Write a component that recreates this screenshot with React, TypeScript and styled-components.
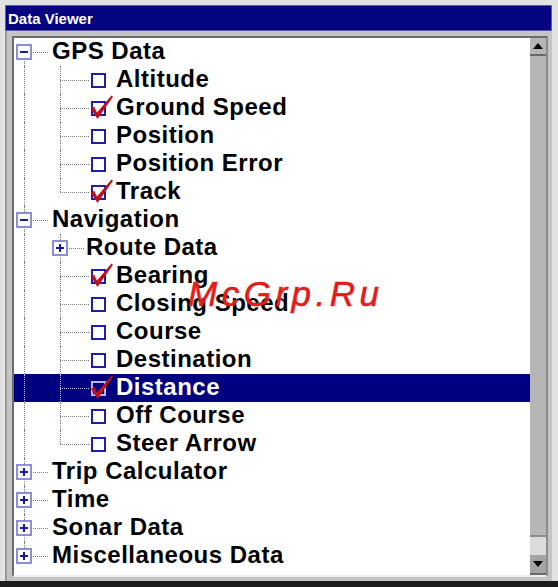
import * as React from "react";
import styled, { createGlobalStyle } from "styled-components";

type Node = {
  label: string;
  checked?: boolean;
  selected?: boolean;
  open?: boolean;
  group?: boolean;
  children?: Node[];
};

const tree: Node[] = [
  {
    label: "GPS Data",
    group: true,
    open: true,
    children: [
      { label: "Altitude" },
      { label: "Ground Speed", checked: true },
      { label: "Position" },
      { label: "Position Error" },
      { label: "Track", checked: true },
    ],
  },
  {
    label: "Navigation",
    group: true,
    open: true,
    children: [
      { label: "Route Data", group: true },
      { label: "Bearing", checked: true },
      { label: "Closing Speed" },
      { label: "Course" },
      { label: "Destination" },
      { label: "Distance", checked: true, selected: true },
      { label: "Off Course" },
      { label: "Steer Arrow" },
    ],
  },
  { label: "Trip Calculator", group: true },
  { label: "Time", group: true },
  { label: "Sonar Data", group: true },
  { label: "Miscellaneous Data", group: true },
];

type Row = {
  node: Node;
  level: number;
  first: boolean;
  last: boolean;
  parentLast: boolean;
};

function flatten(nodes: Node[]): Row[] {
  const rows: Row[] = [];
  nodes.forEach((node, i) => {
    const last = i === nodes.length - 1;
    rows.push({ node, level: 0, first: i === 0, last, parentLast: false });
    if (node.open && node.children) {
      node.children.forEach((child, j) => {
        rows.push({
          node: child,
          level: 1,
          first: false,
          last: j === node.children!.length - 1,
          parentLast: last,
        });
      });
    }
  });
  return rows;
}

export default function App() {
  const rows = flatten(tree);
  return (
    <>
      <GlobalStyle />
      <Window>
        <TitleBar>Data Viewer</TitleBar>
        <Body>
          <Panel>
            <Tree>
              {rows.map((r) => (
                <TreeRow key={r.node.label} row={r} />
              ))}
            </Tree>
            <Scrollbar>
              <ArrowButton>
                <Triangle viewBox="0 0 10 6">
                  <path d="M5 0 L10 6 L0 6 Z" />
                </Triangle>
              </ArrowButton>
              <Track>
                <Thumb />
              </Track>
              <ArrowButton $down>
                <Triangle viewBox="0 0 10 6">
                  <path d="M0 0 L10 0 L5 6 Z" />
                </Triangle>
              </ArrowButton>
            </Scrollbar>
          </Panel>
        </Body>
        <Watermark>McGrp.Ru</Watermark>
      </Window>
    </>
  );
}

function TreeRow({ row }: { row: Row }) {
  const { node, level, first, last, parentLast } = row;
  const sel = !!node.selected;
  return (
    <RowBox $selected={sel}>
      {level === 0 ? (
        <Guide $w={36} $up={!first} $down={!last} $branch>
          <Expander open={!!node.open} />
        </Guide>
      ) : (
        <>
          <Guide $w={36} $up={!parentLast} $down={!parentLast} $branch={false} />
          {node.group ? (
            <Guide $w={36} $up $down={!last} $branch>
              <Expander open={!!node.open} />
            </Guide>
          ) : (
            <>
              <Guide $w={41} $up $down={!last} $branch />
              <CheckBox $selected={sel}>
                {node.checked && (
                  <CheckMark viewBox="0 0 15 15">
                    <path d="M0 8 L3.2 5.8 L6 11.5 L20.5 -5.5 L22 -4.2 L6.5 18 Z" />
                  </CheckMark>
                )}
              </CheckBox>
            </>
          )}
        </>
      )}
      <Label $selected={sel} $gap={level === 0 ? 2 : node.group ? 0 : 10}>
        {node.label}
      </Label>
    </RowBox>
  );
}

function Expander({ open }: { open: boolean }) {
  return (
    <ExpandBox>
      <svg width="10" height="10" viewBox="0 0 10 10">
        <rect x="1" y="4" width="8" height="2" fill="#1a1aa0" />
        {!open && <rect x="4" y="1" width="2" height="8" fill="#1a1aa0" />}
      </svg>
    </ExpandBox>
  );
}

const GlobalStyle = createGlobalStyle`
  html, body {
    margin: 0;
    padding: 0;
    background: #dcdcdc;
  }
  * {
    box-sizing: border-box;
  }
`;

const Window = styled.div`
  position: relative;
  width: 558px;
  height: 587px;
  display: flex;
  flex-direction: column;
  padding: 5px 6px 0 5px;
  background: #e2e2e2;
  border-bottom: 6px solid #1c1c1c;
  font-family: "Liberation Sans", Arial, sans-serif;
`;

const TitleBar = styled.div`
  height: 26px;
  flex: none;
  display: flex;
  align-items: center;
  padding-left: 2px;
  background: #04047f;
  border: 1px solid #5a5ab4;
  color: #fff;
  font-size: 15px;
  font-weight: bold;
`;

const Body = styled.div`
  flex: 1;
  display: flex;
  padding: 5px 4px 4px 5px;
  background: #c4c4c4;
  border-left: 2px solid #9a9a9a;
  min-height: 0;
`;

const Panel = styled.div`
  flex: 1;
  display: flex;
  border: 2px solid;
  border-color: #6c6c6c #8c8c8c #eeeeee #6c6c6c;
  background: #fff;
`;

const Tree = styled.div`
  flex: 1;
  display: flex;
  flex-direction: column;
  background: #fff;
`;

const RowBox = styled.div<{ $selected: boolean }>`
  --line: ${(p) => (p.$selected ? "#c8c8e8" : "#7a7a7a")};
  display: flex;
  align-items: center;
  height: 28px;
  flex: none;
  background: ${(p) => (p.$selected ? "#000080" : "transparent")};
`;

const Guide = styled.span<{ $w: number; $up: boolean; $down: boolean; $branch: boolean }>`
  position: relative;
  flex: none;
  width: ${(p) => p.$w}px;
  height: 100%;
  display: flex;
  align-items: center;
  padding-left: 2px;

  &::before {
    content: "";
    position: absolute;
    left: 10px;
    top: ${(p) => (p.$up ? "0" : "50%")};
    bottom: ${(p) => (p.$down ? "0" : "50%")};
    border-left: 1px dotted var(--line);
    display: ${(p) => (p.$up || p.$down ? "block" : "none")};
  }

  &::after {
    content: "";
    position: absolute;
    left: 10px;
    right: 2px;
    top: 50%;
    border-top: 1px dotted var(--line);
    display: ${(p) => (p.$branch ? "block" : "none")};
  }
`;

const ExpandBox = styled.span`
  position: relative;
  z-index: 1;
  width: 16px;
  height: 16px;
  display: flex;
  align-items: center;
  justify-content: center;
  background: #fff;
  border: 2px solid #8e8ed8;
`;

const CheckBox = styled.span<{ $selected: boolean }>`
  position: relative;
  flex: none;
  width: 15px;
  height: 15px;
  border: 2px solid ${(p) => (p.$selected ? "#b8b8f0" : "#1e1eac")};
  background: ${(p) => (p.$selected ? "#000080" : "#fff")};
`;

const CheckMark = styled.svg`
  position: absolute;
  left: -2px;
  top: -2px;
  width: 15px;
  height: 15px;
  overflow: visible;
  fill: #c0101c;
`;

const Label = styled.span<{ $selected: boolean; $gap: number }>`
  align-self: flex-start;
  margin-left: ${(p) => p.$gap}px;
  line-height: 26px;
  font-size: 24px;
  font-weight: bold;
  letter-spacing: 0.5px;
  white-space: nowrap;
  color: ${(p) => (p.$selected ? "#fff" : "#000")};
`;

const Scrollbar = styled.div`
  width: 16px;
  flex: none;
  display: flex;
  flex-direction: column;
  background: #b6b6b6;
`;

const ArrowButton = styled.div<{ $down?: boolean }>`
  height: ${(p) => (p.$down ? 20 : 18)}px;
  flex: none;
  display: flex;
  align-items: center;
  justify-content: center;
  background: ${(p) => (p.$down ? "#a4a4a4" : "#b6b6b6")};
  border-bottom: 2px solid #6a6a6a;
`;

const Triangle = styled.svg`
  width: 10px;
  height: 6px;
  fill: #000;
`;

const Track = styled.div`
  flex: 1;
  display: flex;
  flex-direction: column;
  justify-content: flex-end;
`;

const Thumb = styled.div`
  height: 20px;
  background: #dcdcdc;
  border-top: 2px solid #8c8c8c;
`;

const Watermark = styled.div`
  position: absolute;
  left: 188px;
  top: 277px;
  font-family: "Liberation Sans", Arial, sans-serif;
  font-style: italic;
  font-size: 35px;
  line-height: 34px;
  letter-spacing: 4.5px;
  color: #e11c1c;
  -webkit-text-stroke: 0.6px #e11c1c;
  pointer-events: none;
`;
